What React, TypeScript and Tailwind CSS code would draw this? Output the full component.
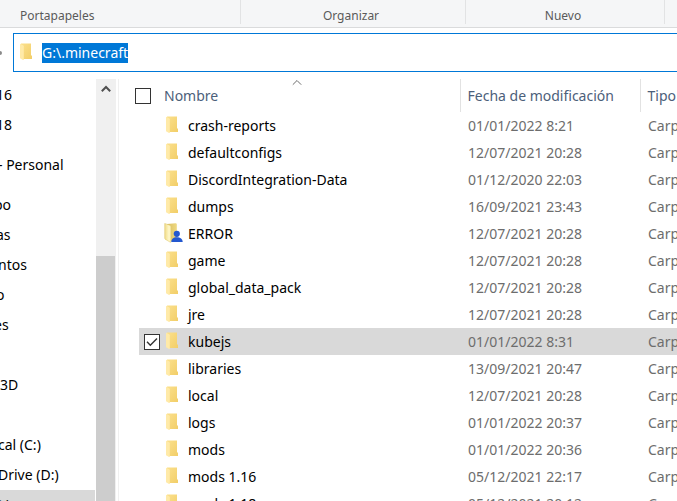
import { useEffect, useRef, useState } from 'react';

type Row = { name: string; date: string; shared?: boolean };

const rows: Row[] = [
  { name: 'crash-reports', date: '01/01/2022 8:21' },
  { name: 'defaultconfigs', date: '12/07/2021 20:28' },
  { name: 'DiscordIntegration-Data', date: '01/12/2020 22:03' },
  { name: 'dumps', date: '16/09/2021 23:43' },
  { name: 'ERROR', date: '12/07/2021 20:28', shared: true },
  { name: 'game', date: '12/07/2021 20:28' },
  { name: 'global_data_pack', date: '12/07/2021 20:28' },
  { name: 'jre', date: '12/07/2021 20:28' },
  { name: 'kubejs', date: '01/01/2022 8:31' },
  { name: 'libraries', date: '13/09/2021 20:47' },
  { name: 'local', date: '12/07/2021 20:28' },
  { name: 'logs', date: '01/01/2022 20:37' },
  { name: 'mods', date: '01/01/2022 20:36' },
  { name: 'mods 1.16', date: '05/12/2021 22:17' },
  { name: 'mods 1.18', date: '05/12/2021 20:12' },
];

// Navigation entries, grouped; the pane is scrolled sideways so labels start cut off.
const navGroups: { label: string; shift: string }[][] = [
  [
    { label: '16', shift: '-ml-1' },
    { label: '18', shift: '-ml-1' },
  ],
  [{ label: '- Personal', shift: '-ml-0.5' }],
  [
    { label: 'po', shift: '-ml-1.5' },
    { label: 'as', shift: '-ml-1' },
    { label: 'ntos', shift: '-ml-0.5' },
    { label: 'o', shift: '-ml-1' },
    { label: 'es', shift: '-ml-1.5' },
    { label: '', shift: 'ml-0' },
    { label: '3D', shift: 'ml-0' },
    { label: '', shift: 'ml-0' },
    { label: 'cal (C:)', shift: '-ml-0.5' },
    { label: 'Drive (D:)', shift: '-ml-0.5' },
    { label: 'G:)', shift: '-ml-2' },
  ],
];

function FolderIcon() {
  return (
    <svg className="mb-0.5 block" width="13" height="18" viewBox="0 0 13 18" aria-hidden="true">
      <defs>
        <linearGradient id="folderBack" x1="0" y1="0" x2="1" y2="1">
          <stop offset="0" stopColor="#fbe08c" />
          <stop offset="1" stopColor="#f2ce68" />
        </linearGradient>
      </defs>
      <path d="M1 0.5H11V12L12 13V16H3L1 14Z" fill="url(#folderBack)" />
      <path d="M0 0.7L3.2 2.2Q3.8 2.5 3.8 3.3V16.4Q3.8 17.2 3 17L0 15.2Z" fill="#ffeaa8" />
    </svg>
  );
}

function SharedFolderIcon() {
  return (
    <svg className="mb-0.5 block" width="19" height="20" viewBox="0 0 19 20" aria-hidden="true">
      <defs>
        <linearGradient id="sharedFront" x1="0" y1="0" x2="1" y2="0">
          <stop offset="0" stopColor="#f0dc86" />
          <stop offset="0.7" stopColor="#fff8cc" />
          <stop offset="1" stopColor="#f7e7a0" />
        </linearGradient>
        <linearGradient id="sharedBack" x1="0" y1="0" x2="1" y2="0">
          <stop offset="0" stopColor="#d9bf62" />
          <stop offset="1" stopColor="#efd982" />
        </linearGradient>
      </defs>
      <path d="M3 1L11.5 0.3Q12.8 0.3 12.8 1.5V17L6 18.5Z" fill="url(#sharedBack)" />
      <path d="M0.7 0.4L6.2 2.4Q7 2.8 7 3.7V18.6Q7 19.6 6.2 19.2L1.2 16.2Q0.7 15.8 0.7 15Z" fill="url(#sharedFront)" stroke="#dcc66f" strokeWidth="0.5" />
      <circle cx="12.8" cy="10.8" r="3.1" fill="#2358cf" />
      <path d="M7.3 19C7.3 16 9.3 14.2 12.8 14.2S18.7 16 18.7 19Z" fill="#2358cf" />
    </svg>
  );
}

function Ribbon() {
  return (
    <div className="flex h-7 border-b border-[#dadbdc] bg-[#f5f6f7] pb-[3px] text-xs text-[#5a5a5a]">
      <div className="w-[241px] border-r border-[#e2e3e4] px-5 pt-2">Portapapeles</div>
      <div className="w-[225px] border-r border-[#e2e3e4] pt-2 pr-1 text-center">Organizar</div>
      <div className="w-[199px] border-r border-[#e2e3e4] pt-2 pr-1 text-center">Nuevo</div>
    </div>
  );
}

function AddressBar() {
  const ref = useRef<HTMLInputElement>(null);
  const [path, setPath] = useState('G:\\.minecraft');

  useEffect(() => {
    ref.current?.focus();
    ref.current?.select();
  }, []);

  return (
    <div className="flex items-center pt-[5px]">
      <span className="flex w-[13px] items-center">
        <span className="h-1 w-0.5 rounded-r bg-[#8a8a8a]" />
      </span>
      <label className="flex h-[39px] flex-1 items-center border border-r-0 border-[#0078d7] pl-1.5">
        <FolderIcon />
        <input
          ref={ref}
          value={path}
          onChange={(e) => setPath(e.target.value)}
          aria-label="G:\.minecraft"
          spellCheck={false}
          className="ml-[9px] min-w-0 flex-1 bg-transparent outline-none selection:bg-[#0078d7] selection:text-white"
        />
      </label>
    </div>
  );
}

function NavPane() {
  return (
    <div className="flex w-[119px] shrink-0 border-r border-[#f0f0f0]">
      <nav className="flex w-24 flex-col gap-2.5 overflow-hidden pt-px">
        {navGroups.map((group, g) => (
          <ul key={g}>
            {group.map((item, i) => (
              <li
                key={i}
                className={`mr-px flex h-[30px] items-center whitespace-nowrap ${item.label === 'G:)' ? 'bg-[#d9d9d9]' : ''}`}
              >
                {item.label && (
                  <a href="#" className={item.shift}>
                    {item.label}
                  </a>
                )}
              </li>
            ))}
          </ul>
        ))}
      </nav>
      <div className="flex w-5 flex-col bg-[#f0f0f0]">
        <button type="button" aria-label="▲" className="flex h-5 w-full items-center justify-center">
          <svg width="10" height="8" viewBox="0 0 10 8" aria-hidden="true">
            <path d="M0.8 6.2L5 2L9.2 6.2" fill="none" stroke="#505050" strokeWidth="2" />
          </svg>
        </button>
        <div className="mt-[157px] mr-px flex-1 bg-[#cdcdcd]" />
      </div>
    </div>
  );
}

const boxClass =
  'block size-4 shrink-0 appearance-none border border-[#333333] bg-white';

function FileList() {
  const [selected, setSelected] = useState('kubejs');

  return (
    <div className="min-w-0 flex-1 overflow-hidden">
      <table className="w-full table-fixed border-collapse whitespace-nowrap text-left">
        <colgroup>
          <col className="w-5" />
          <col className="w-[25px]" />
          <col className="w-[296px]" />
          <col className="w-[180px]" />
          <col />
        </colgroup>
        <thead className="text-[#4c607a]">
          <tr className="h-[33px]">
            <th colSpan={3} className="p-0 font-normal">
              <div className="relative ml-4 flex h-[33px] items-center">
                <input type="checkbox" aria-label="Nombre" className={boxClass} />
                <button type="button" className="ml-[13px]">
                  Nombre
                </button>
                <svg
                  className="absolute top-0 left-1/2 -translate-x-1/2"
                  width="11"
                  height="7"
                  viewBox="0 0 11 7"
                  aria-hidden="true"
                >
                  <path d="M1.3 5.7L5.5 1.5L9.7 5.7" fill="none" stroke="#6d6d6d" />
                </svg>
              </div>
            </th>
            <th className="border-l border-[#e2e2e2] p-0 pl-[7px] font-normal">
              <button type="button">Fecha de modificación</button>
            </th>
            <th className="border-l border-[#e2e2e2] p-0 pl-[7px] font-normal">
              <button type="button">Tipo</button>
            </th>
          </tr>
        </thead>
        <tbody>
          {rows.map((row) => {
            const active = row.name === selected;
            const bg = active ? 'bg-[#d9d9d9]' : '';
            return (
              <tr key={row.name} className="h-[27px]" onClick={() => setSelected(row.name)}>
                <td className="p-0" />
                <td className={`p-0 pl-[5px] ${bg}`}>
                  {active && (
                    <span className="relative block size-4">
                      <input
                        type="checkbox"
                        checked
                        readOnly
                        aria-label={row.name}
                        className={boxClass}
                      />
                      <svg
                        className="pointer-events-none absolute inset-0"
                        width="16"
                        height="16"
                        viewBox="0 0 16 16"
                        aria-hidden="true"
                      >
                        <path d="M3 7.8L6.3 11.3L13 4.5" fill="none" stroke="#333333" strokeWidth="1.4" />
                      </svg>
                    </span>
                  )}
                </td>
                <td className={`p-0 ${bg}`}>
                  <div className="flex items-center">
                    <span className="flex w-6 justify-start">
                      {row.shared ? (
                        <SharedFolderIcon />
                      ) : (
                        <span className="ml-0.5">
                          <FolderIcon />
                        </span>
                      )}
                    </span>
                    <span>{row.name}</span>
                  </div>
                </td>
                <td className={`p-0 pl-2 text-[#6d6d6d] ${bg}`}>{row.date}</td>
                <td className={`overflow-hidden p-0 pl-2 text-[#6d6d6d] ${bg}`}>Carp</td>
              </tr>
            );
          })}
        </tbody>
      </table>
    </div>
  );
}

export default function App() {
  return (
    <div className="flex h-screen flex-col overflow-hidden bg-white font-['Noto_Sans','Open_Sans',sans-serif] text-sm text-black">
      <Ribbon />
      <AddressBar />
      <div className="mt-[7px] flex min-h-0 flex-1">
        <NavPane />
        <FileList />
      </div>
    </div>
  );
}
